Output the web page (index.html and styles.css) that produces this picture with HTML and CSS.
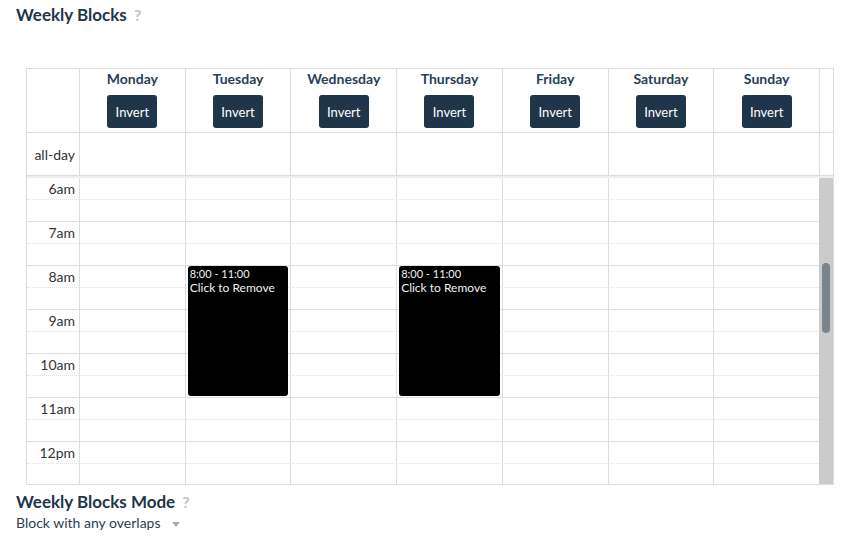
FILE: index.html
```html
<!DOCTYPE html>
<html>
<head>
<meta charset="utf-8">
<link rel="stylesheet" href="styles.css">
</head>
<body>
<div class="page">
  <h2 class="title">Weekly Blocks <span class="help">?</span></h2>
  <div class="cal">
    <div class="row head">
      <div class="cell axis"></div>
      <div class="cell day"><div class="dname">Monday</div><button class="btn">Invert</button></div>
      <div class="cell day"><div class="dname">Tuesday</div><button class="btn">Invert</button></div>
      <div class="cell day"><div class="dname">Wednesday</div><button class="btn">Invert</button></div>
      <div class="cell day"><div class="dname">Thursday</div><button class="btn">Invert</button></div>
      <div class="cell day"><div class="dname">Friday</div><button class="btn">Invert</button></div>
      <div class="cell day"><div class="dname">Saturday</div><button class="btn">Invert</button></div>
      <div class="cell day"><div class="dname">Sunday</div><button class="btn">Invert</button></div>
      <div class="cell gutter"></div>
    </div>
    <div class="row allday">
      <div class="cell axis adlabel">all-day</div>
      <div class="cell"></div><div class="cell"></div><div class="cell"></div><div class="cell"></div>
      <div class="cell"></div><div class="cell"></div><div class="cell"></div>
      <div class="cell gutter"></div>
    </div>
    <div class="divider"></div>
    <div class="body">
      <div class="scroller">
        <div class="slots">
          <div class="slot hour"><span class="lbl">6am</span></div><div class="slot half"></div>
          <div class="slot hour"><span class="lbl">7am</span></div><div class="slot half"></div>
          <div class="slot hour"><span class="lbl">8am</span></div><div class="slot half"></div>
          <div class="slot hour"><span class="lbl">9am</span></div><div class="slot half"></div>
          <div class="slot hour"><span class="lbl">10am</span></div><div class="slot half"></div>
          <div class="slot hour"><span class="lbl">11am</span></div><div class="slot half"></div>
          <div class="slot hour"><span class="lbl">12pm</span></div><div class="slot half"></div>
        </div>
        <div class="cols">
          <div class="col axiscol"></div>
          <div class="col"></div>
          <div class="col"><div class="event"><div class="etime">8:00 - 11:00</div><div class="etitle">Click to Remove</div></div></div>
          <div class="col"></div>
          <div class="col"><div class="event"><div class="etime">8:00 - 11:00</div><div class="etitle">Click to Remove</div></div></div>
          <div class="col"></div>
          <div class="col"></div>
          <div class="col"></div>
        </div>
      </div>
      <div class="scrollbar"><div class="thumb"></div></div>
    </div>
  </div>
  <h2 class="title mode">Weekly Blocks Mode <span class="help">?</span></h2>
  <div class="select">Block with any overlaps <span class="caret"></span></div>
</div>
</body>
</html>
```
FILE: styles.css
```css
* { box-sizing: border-box; }
html, body { margin: 0; padding: 0; background: #fff; }
body { font-family: "Lato", "Liberation Sans", sans-serif; color: #2c3e50; }
.page { padding: 4px 16px 0 16px; }
.title {
  margin: 0;
  font-size: 17px;
  font-weight: 700;
  color: #1f3549;
  line-height: 22px;
}
.help { color: #c4c4c4; font-size: 16px; font-weight: 700; margin-left: 3px; }
.cal {
  margin: 42px 0 0 10px;
  width: 808px;
  border: 1px solid #dddddd;
}
.row {
  display: grid;
  grid-template-columns: 52px repeat(7, 1fr) 14px;
}
.cell { border-left: 1px solid #dddddd; }
.cell.axis { border-left: 0; }
.head .cell { height: 64px; border-bottom: 1px solid #dddddd; }
.day { display: flex; flex-direction: column; align-items: center; padding-top: 2px; }
.dname { font-size: 14px; font-weight: 700; color: #2a3f54; line-height: 16px; }
.btn {
  margin-top: 8px;
  width: 50px;
  height: 33px;
  border: 0;
  border-radius: 3px;
  background: #1f364a;
  color: #ffffff;
  font-family: "Lato", "Liberation Sans", sans-serif;
  font-size: 13px;
  padding: 0;
}
.allday .cell { height: 42px; }
.adlabel { font-size: 14px; color: #333; display: flex; align-items: center; justify-content: flex-end; padding-right: 4px; }
.divider { height: 3px; border-top: 1px solid #dddddd; background: #eeeeee; }
.body { display: flex; height: 306px; overflow: hidden; }
.scroller { flex: 1; position: relative; overflow: hidden; }
.slots { margin-top: -1px; }
.slot { height: 22px; border-top: 1px solid #dddddd; position: relative; }
.slot.half { border-top: 1px dotted #e2e2e2; }
.lbl {
  display: block;
  width: 52px;
  text-align: right;
  padding-right: 4px;
  font-size: 14px;
  line-height: 21px;
  color: #333;
  background: #fff;
}
.cols {
  position: absolute;
  inset: 0;
  display: grid;
  grid-template-columns: 52px repeat(7, 1fr);
}
.col { border-left: 1px solid #dddddd; position: relative; }
.col.axiscol { border-left: 0; }
.event {
  position: absolute;
  left: 2px;
  right: 2px;
  top: 88px;
  height: 130px;
  background: #000;
  border-radius: 3px;
  color: #f0f0f0;
  padding: 1px 2px;
}
.etime { font-size: 11px; line-height: 13px; }
.etitle { font-size: 12px; line-height: 16px; }
.scrollbar { width: 14px; background: #cbcbcb; position: relative; }
.thumb {
  position: absolute;
  left: 3px;
  width: 8px;
  top: 85px;
  height: 70px;
  border-radius: 4px;
  background: #7b848b;
}
.title.mode { margin-top: 6px; }
.select { font-size: 14px; color: #2c3e50; margin-top: 1px; line-height: 18px; }
.caret {
  display: inline-block;
  margin-left: 8px;
  width: 0; height: 0;
  border-left: 4px solid transparent;
  border-right: 4px solid transparent;
  border-top: 5px solid #aaa;
  vertical-align: middle;
}
```
